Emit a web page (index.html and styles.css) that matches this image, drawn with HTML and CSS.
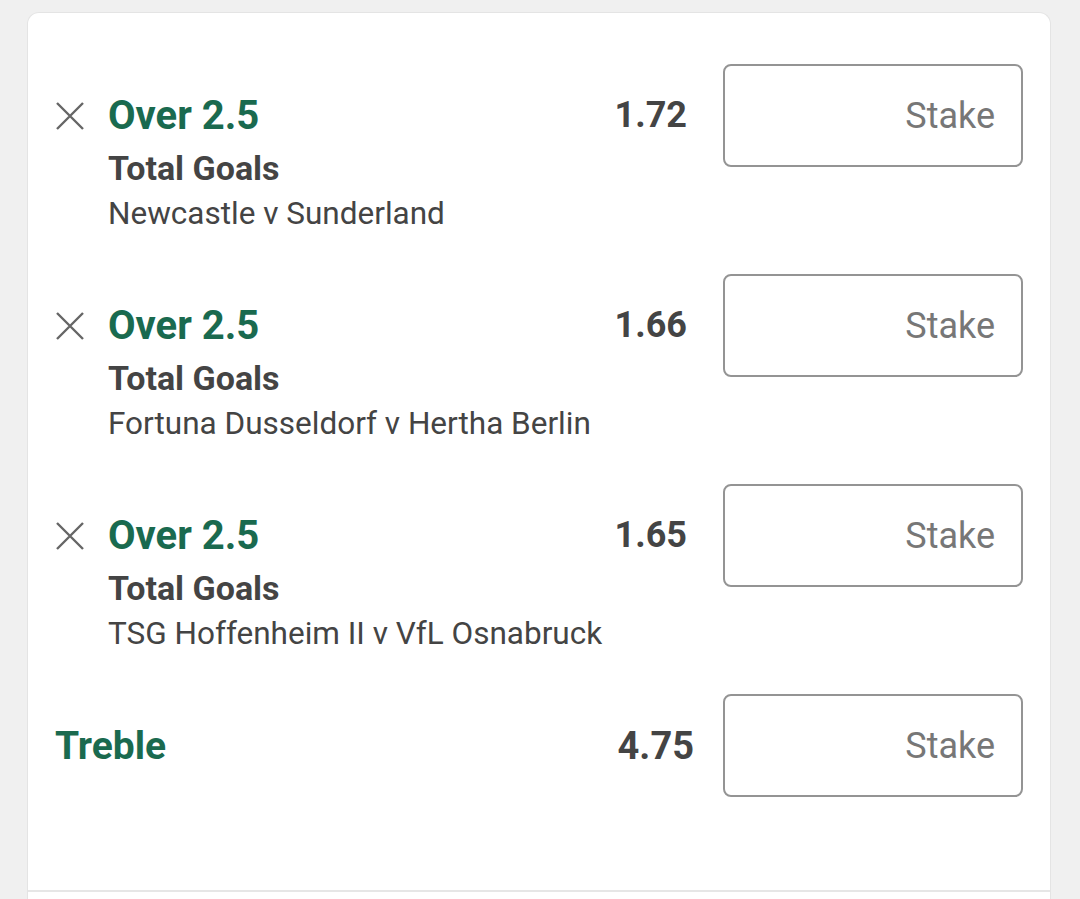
FILE: index.html
```html
<!DOCTYPE html>
<html lang="en">
<head>
    <meta charset="UTF-8">
    <meta name="viewport" content="width=device-width, initial-scale=1.0">
    <title>Bet Slip</title>
    <link rel="stylesheet" href="styles.css">
</head>
<body>
    <div class="slip">
        <div class="selections">
            <div class="bet">
                <button class="remove" aria-label="Remove">
                    <svg viewBox="0 0 28 28" width="28" height="28"><path d="M1 1 L27 27 M27 1 L1 27" stroke="#666" stroke-width="2.4" fill="none"/></svg>
                </button>
                <div class="bet-info">
                    <div class="bet-title">Over 2.5</div>
                    <div class="bet-market">Total Goals</div>
                    <div class="bet-event">Newcastle v Sunderland</div>
                </div>
                <div class="bet-odds">1.72</div>
                <input class="stake" type="text" placeholder="Stake">
            </div>

            <div class="bet">
                <button class="remove" aria-label="Remove">
                    <svg viewBox="0 0 28 28" width="28" height="28"><path d="M1 1 L27 27 M27 1 L1 27" stroke="#666" stroke-width="2.4" fill="none"/></svg>
                </button>
                <div class="bet-info">
                    <div class="bet-title">Over 2.5</div>
                    <div class="bet-market">Total Goals</div>
                    <div class="bet-event">Fortuna Dusseldorf v Hertha Berlin</div>
                </div>
                <div class="bet-odds">1.66</div>
                <input class="stake" type="text" placeholder="Stake">
            </div>

            <div class="bet">
                <button class="remove" aria-label="Remove">
                    <svg viewBox="0 0 28 28" width="28" height="28"><path d="M1 1 L27 27 M27 1 L1 27" stroke="#666" stroke-width="2.4" fill="none"/></svg>
                </button>
                <div class="bet-info">
                    <div class="bet-title">Over 2.5</div>
                    <div class="bet-market">Total Goals</div>
                    <div class="bet-event">TSG Hoffenheim II v VfL Osnabruck</div>
                </div>
                <div class="bet-odds">1.65</div>
                <input class="stake" type="text" placeholder="Stake">
            </div>

            <div class="multiple">
                <div class="multiple-name">Treble</div>
                <div class="multiple-odds">4.75</div>
                <input class="stake" type="text" placeholder="Stake">
            </div>
        </div>
        <div class="slip-footer"></div>
    </div>
</body>
</html>
```

FILE: styles.css
```css
body {
    margin: 0;
    background-color: #f0f0f0;
    font-family: Roboto, "Liberation Sans", Arial, sans-serif;
    color: #444;
}
.slip {
    margin: 12px 29px 0 27px;
    background-color: #fff;
    border: 1px solid #e4e4e4;
    border-bottom: none;
    border-radius: 12px 12px 0 0;
    min-height: 900px;
}
.selections {
    display: flex;
    flex-direction: column;
    gap: 39px;
    padding: 51px 27px 93px 27px;
}
.bet {
    display: grid;
    grid-template-columns: 30px minmax(0, 1fr) auto 300px;
    column-gap: 23px;
    align-items: start;
}
.remove {
    height: 103px;
    padding: 0;
    border: none;
    background: none;
    display: flex;
    align-items: center;
    justify-content: center;
    cursor: pointer;
}
.bet-info {
    padding-top: 24px;
    white-space: nowrap;
}
.bet-title {
    font-size: 40px;
    font-weight: 700;
    line-height: 56px;
    color: #1a6a4f;
}
.bet-market {
    font-size: 34px;
    font-weight: 700;
    line-height: 49px;
    color: #444;
}
.bet-event {
    font-size: 31.5px;
    line-height: 42px;
    color: #444;
}
.bet-odds {
    font-size: 36px;
    font-weight: 700;
    line-height: 103px;
    color: #444;
    margin-right: 13px;
}
.stake {
    box-sizing: border-box;
    width: 300px;
    height: 103px;
    border: 2px solid #949494;
    border-radius: 8px;
    padding: 0 26px;
    font-family: inherit;
    font-size: 36px;
    text-align: right;
    color: #444;
    background: #fff;
    outline: none;
}
.stake::placeholder {
    color: #777;
}
.multiple {
    display: flex;
    align-items: center;
}
.multiple-name {
    flex: 1;
    font-size: 39px;
    font-weight: 700;
    color: #1a6a4f;
}
.multiple-odds {
    font-size: 38px;
    font-weight: 700;
    color: #444;
    margin-right: 29px;
}
.slip-footer {
    border-top: 2px solid #e6e6e6;
}
```
